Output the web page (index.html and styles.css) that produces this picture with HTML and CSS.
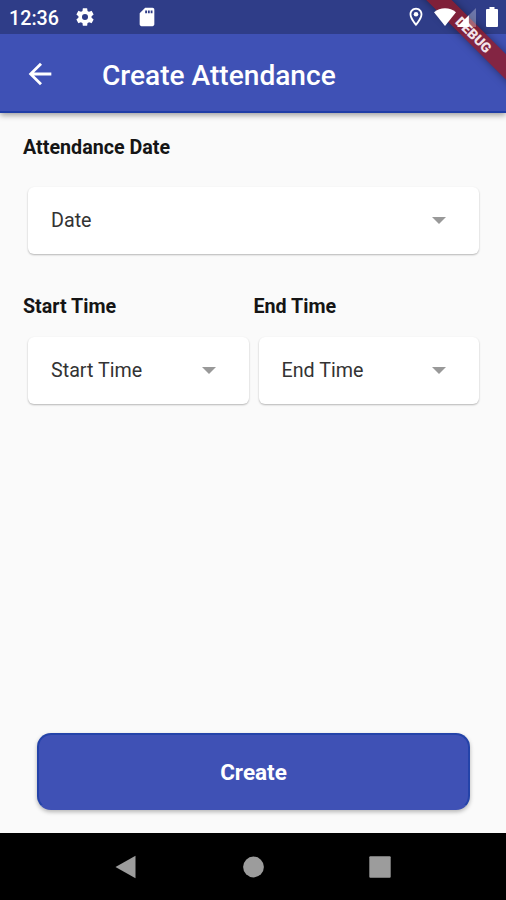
FILE: index.html
```html
<!DOCTYPE html>
<html lang="en">
<head>
<meta charset="utf-8">
<title>Create Attendance</title>
<link rel="stylesheet" href="styles.css">
</head>
<body>
<div class="screen">
  <header class="top">
    <div class="status">
      <span class="clock">12:36</span>
      <svg class="gear" viewBox="0 0 24 24"><path d="M19.14 12.94c.04-.3.06-.61.06-.94s-.02-.64-.07-.94l2.03-1.58a.49.49 0 0 0 .12-.61l-1.92-3.32a.49.49 0 0 0-.59-.22l-2.39.96c-.5-.38-1.03-.7-1.62-.94l-.36-2.54a.48.48 0 0 0-.48-.41h-3.84c-.24 0-.43.17-.47.41l-.36 2.54c-.59.24-1.13.57-1.62.94l-2.39-.96c-.22-.08-.47 0-.59.22L2.74 8.87c-.12.21-.08.47.12.61l2.03 1.58c-.05.3-.09.63-.09.94s.02.64.07.94l-2.03 1.58a.49.49 0 0 0-.12.61l1.92 3.32c.12.22.37.29.59.22l2.39-.96c.5.38 1.03.7 1.62.94l.36 2.54c.05.24.24.41.48.41h3.84c.24 0 .44-.17.47-.41l.36-2.54c.59-.24 1.13-.56 1.62-.94l2.39.96c.22.08.47 0 .59-.22l1.92-3.32a.49.49 0 0 0-.12-.61zM12 15.3a3.3 3.3 0 1 1 0-6.6 3.3 3.3 0 0 1 0 6.6z"/></svg>
      <svg class="card-icon" viewBox="0 0 24 24"><path d="M18 2h-8L4.020 8 4 20c0 1.100.9 2 2 2h12c1.100 0 2-.9 2-2V4c0-1.100-.9-2-2-2zm-6 6h-2V5h2v3zm3 0h-2V5h2v3zm3 0h-2V5h2v3z"/></svg>
      <span class="grow"></span>
      <svg class="pin" viewBox="0 0 24 24"><path d="M12 2C8.130 2 5 5.130 5 9c0 5.250 7 13 7 13s7-7.750 7-13c0-3.870-3.130-7-7-7zM7 9c0-2.760 2.240-5 5-5s5 2.240 5 5c0 2.880-2.880 7.190-5 9.880C9.920 16.210 7 11.850 7 9z"/><circle cx="12" cy="9" r="2.500"/></svg>
      <svg class="wifi" viewBox="0 0 22 18"><path d="M0 4.200C6-1.200 16-1.200 22 4.200L11 18z"/></svg>
      <svg class="signal" viewBox="0 0 20 20"><path d="M0 20L20 0v20z" opacity=".3"/><path d="M0 20L12.500 7.500V20z"/></svg>
      <svg class="battery" viewBox="0 0 12 20"><path d="M3.500 0h5v2H11q1 0 1 1v16q0 1-1 1H1q-1 0-1-1V3q0-1 1-1h2.500z"/></svg>
    </div>
    <div class="appbar">
      <svg class="back" viewBox="0 0 24 24"><path d="M20 11H7.830l5.590-5.590L12 4l-8 8 8 8 1.410-1.410L7.830 13H20v-2z"/></svg>
      <h1>Create Attendance</h1>
    </div>
    <div class="debug-corner"><div class="debug">DEBUG</div></div>
  </header>
  <main>
    <section class="field date">
      <h2>Attendance Date</h2>
      <div class="select"><span>Date</span><svg viewBox="0 0 14 7"><path d="M0 0h14L7 7z"/></svg></div>
    </section>
    <div class="times">
      <section class="field">
        <h2>Start Time</h2>
        <div class="select"><span>Start Time</span><svg viewBox="0 0 14 7"><path d="M0 0h14L7 7z"/></svg></div>
      </section>
      <section class="field">
        <h2>End Time</h2>
        <div class="select"><span>End Time</span><svg viewBox="0 0 14 7"><path d="M0 0h14L7 7z"/></svg></div>
      </section>
    </div>
    <button class="create">Create</button>
  </main>
  <nav>
    <svg viewBox="0 0 24 24"><path d="M.5 12L20.500 .700v22.600z"/></svg>
    <svg viewBox="0 0 24 24"><circle cx="12.500" cy="12" r="10.400"/></svg>
    <svg viewBox="0 0 24 24"><rect x="1.300" y="1.300" width="21.400" height="21.400" rx="1"/></svg>
  </nav>
</div>
</body>
</html>
```

FILE: styles.css
```css
* { box-sizing: border-box; }
body { margin: 0; font-family: Roboto, sans-serif; }
svg { display: block; flex: none; fill: currentColor; }
h1, h2 { margin: 0; }
.screen {
  width: 506px;
  height: 900px;
  display: flex;
  flex-direction: column;
  overflow: hidden;
  background: #fafafa;
}
.top {
  position: relative;
  flex: none;
  height: 113px;
  color: #fff;
  background: #3f51b5;
  border-bottom: 2px solid #1f3da6;
  box-shadow: 0 2px 6px rgba(0, 0, 0, .4);
}
.status {
  height: 34px;
  padding: 0 8px 0 9px;
  display: flex;
  align-items: center;
  background: #2f3d88;
}
.status svg { position: relative; z-index: 2; }
.clock { width: 65px; font-size: 19.7px; font-weight: 500; line-height: 34px; padding-top: 3px; }
.gear { width: 22px; height: 22px; margin-right: 40px; }
.card-icon { width: 22px; height: 22px; }
.grow { flex: 1; }
.pin { width: 22px; height: 22px; margin-right: 7px; }
.wifi { width: 22px; height: 18px; margin-right: 1px; }
.signal { width: 19px; height: 19px; margin-right: 10px; }
.battery { width: 12px; height: 20px; }
.appbar { height: 79px; display: flex; align-items: center; padding-left: 23px; }
.back { width: 34px; height: 34px; margin-right: 45px; }
h1 { font-size: 28.1px; font-weight: 500; line-height: 34px; padding-top: 4px; white-space: nowrap; }
.debug-corner {
  position: absolute;
  top: 0;
  right: 0;
  width: 100px;
  height: 100px;
  overflow: hidden;
}
.debug {
  position: absolute;
  left: -13px;
  top: 25px;
  width: 160px;
  height: 18px;
  padding-left: 2px;
  transform: rotate(45deg);
  background: rgba(150, 24, 34, .78);
  box-shadow: 0 0 8px rgba(0, 0, 0, .4);
  color: #f3e4ea;
  font-size: 13.8px;
  font-weight: 900;
  line-height: 18px;
  text-align: center;
}
main { flex: 1; display: flex; flex-direction: column; padding: 23px 22px 23px 23px; }
h2 { font-size: 19.7px; font-weight: 700; line-height: 24px; color: #151515; white-space: nowrap; }
.select {
  height: 67px;
  margin: 18px 5px 0;
  padding: 0 33px 0 23px;
  display: flex;
  align-items: center;
  justify-content: space-between;
  border-radius: 6px;
  background: #fff;
  box-shadow: 0 1px 2px rgba(0, 0, 0, .28);
  color: #333;
  font-size: 19.7px;
}
.select svg { width: 14px; height: 7px; color: #999; }
.date .select { margin-top: 27px; }
.date .select span { padding-bottom: 1px; }
.times { display: grid; grid-template-columns: 1fr 1fr; margin-top: 41px; }
.create {
  height: 77px;
  margin: auto 14px 0;
  padding-top: 1px;
  border: 2px solid #2443a9;
  border-bottom-color: #3f51b5;
  border-radius: 14px;
  background: #3f51b5;
  box-shadow: 0 2px 4px rgba(0, 0, 0, .28);
  color: #fff;
  font: 700 22.500px Roboto, sans-serif;
}
nav {
  height: 67px;
  flex: none;
  display: flex;
  justify-content: center;
  align-items: center;
  gap: 102.500px;
  color: #9c9c9c;
  background: #000;
}
nav svg { width: 24px; height: 24px; }
```
